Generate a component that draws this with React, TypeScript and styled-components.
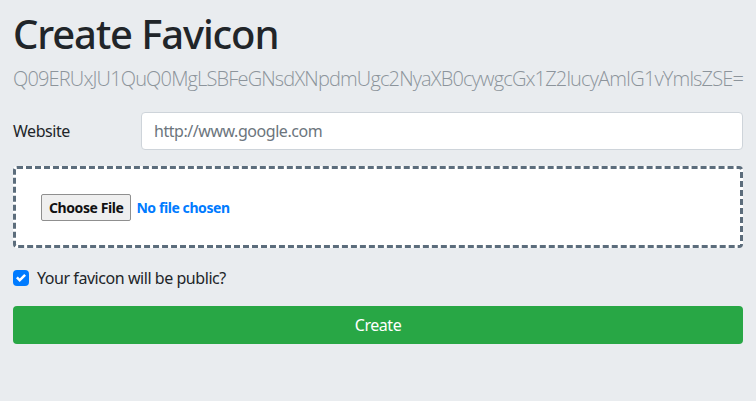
import React from "react";
import styled, { createGlobalStyle } from "styled-components";

const GlobalStyle = createGlobalStyle`
  html, body {
    margin: 0;
    padding: 0;
    background: #e9ecef;
  }
  body {
    font-family: "Noto Sans", "Open Sans", sans-serif;
    font-size: 16px;
    letter-spacing: -0.028em;
    color: #212529;
  }
  * { box-sizing: border-box; }
`;

const Page = styled.main`
  padding: 10px 13px 0;
  display: flex;
  flex-direction: column;
`;

const Title = styled.h1`
  margin: 0 0 6px;
  font-size: 40px;
  line-height: 48px;
  font-weight: 500;
  letter-spacing: -0.028em;
  color: #212529;
`;

const Token = styled.p`
  margin: 0 0 18px;
  font-family: "Open Sans", "Noto Sans", sans-serif;
  font-size: 20px;
  line-height: 30px;
  font-weight: 300;
  letter-spacing: -0.042em;
  color: #8c949b;
  white-space: nowrap;
`;

const FieldRow = styled.div`
  display: grid;
  grid-template-columns: 128px 1fr;
  align-items: center;
  margin-bottom: 16px;
`;

const Label = styled.label`
  font-size: 16px;
  line-height: 24px;
`;

const TextInput = styled.input`
  height: 38px;
  width: 100%;
  padding: 6px 12px;
  font: inherit;
  font-size: 16px;
  letter-spacing: -0.028em;
  color: #495057;
  background: #fff;
  border: 1px solid #ced4da;
  border-radius: 4px;
  &::placeholder { color: #6c757d; }
`;

const DropZone = styled.div`
  height: 82px;
  display: flex;
  align-items: center;
  padding: 0 25px;
  background: #fff;
  border: 3px dashed #5c6d7c;
  border-radius: 4px;
  margin-bottom: 18px;
`;

const FileInput = styled.input`
  font-family: "Noto Sans", sans-serif;
  font-size: 14px;
  font-weight: 700;
  letter-spacing: -0.03em;
  color: #007bff;
  &::file-selector-button {
    height: 27px;
    margin-right: 5px;
    padding: 0 7px;
    font: inherit;
    letter-spacing: -0.03em;
    color: #111;
    background: #efefef;
    border: 1px solid #8f8f8f;
    border-radius: 2px;
  }
`;

const CheckRow = styled.label`
  display: flex;
  align-items: center;
  gap: 8px;
  font-size: 16px;
  line-height: 24px;
  margin-bottom: 16px;
`;

const CheckBox = styled.span`
  width: 16px;
  height: 16px;
  border-radius: 4px;
  background: #007bff;
  display: flex;
  align-items: center;
  justify-content: center;
`;

const SubmitButton = styled.button`
  height: 38px;
  width: 100%;
  border: none;
  border-radius: 4px;
  background: #28a745;
  color: #fff;
  font: inherit;
  font-size: 16px;
  letter-spacing: -0.028em;
`;

export default function App() {
  return (
    <>
      <GlobalStyle />
      <Page>
        <Title>Create Favicon</Title>
        <Token>Q09ERUxJU1QuQ0MgLSBFeGNsdXNpdmUgc2NyaXB0cywgcGx1Z2lucyAmIG1vYmlsZSE=</Token>
        <FieldRow>
          <Label htmlFor="website">Website</Label>
          <TextInput id="website" placeholder="http://www.google.com" />
        </FieldRow>
        <DropZone>
          <FileInput type="file" />
        </DropZone>
        <CheckRow>
          <CheckBox>
            <svg width="10" height="10" viewBox="0 0 8 8">
              <path fill="#fff" d="M6.564.75l-3.59 3.612-1.538-1.55L0 4.26l2.974 2.99L8 2.193z" />
            </svg>
          </CheckBox>
          Your favicon will be public?
        </CheckRow>
        <SubmitButton>Create</SubmitButton>
      </Page>
    </>
  );
}
